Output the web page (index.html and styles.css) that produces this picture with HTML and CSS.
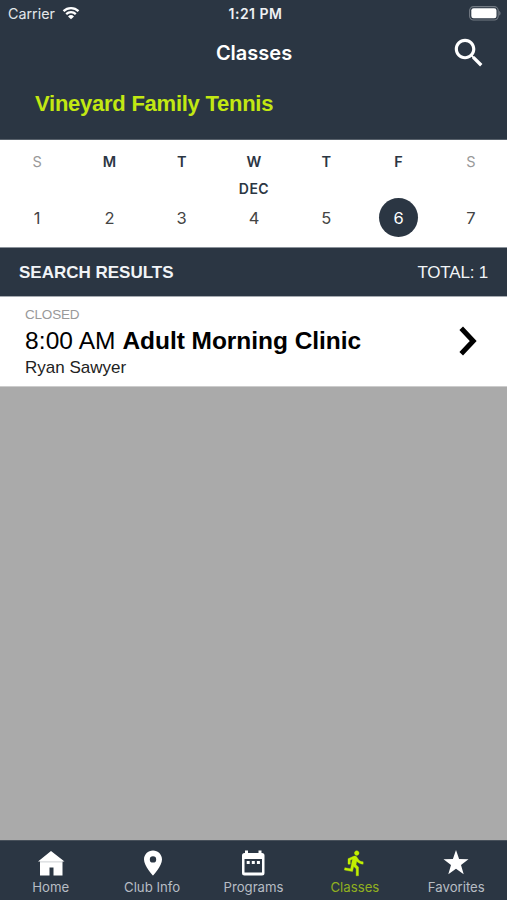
FILE: index.html
```html
<!DOCTYPE html>
<html lang="en">
<head>
    <meta charset="UTF-8">
    <meta name="viewport" content="width=device-width, initial-scale=1.0">
    <title>Classes</title>
    <link rel="stylesheet" href="styles.css">
</head>
<body>
    <header class="header">
        <div class="status-bar">
            <div class="carrier">
                <span>Carrier</span>
                <svg class="wifi" viewBox="0 0 18 14">
                    <path d="M1.5 5.2a10.8 10.8 0 0 1 15 0M4.2 8.1a7 7 0 0 1 9.6 0" fill="none" stroke="#fff" stroke-width="2.3"/>
                    <path d="M9 13.2L6 10.4a4.4 4.4 0 0 1 6 0z" fill="#fff"/>
                </svg>
            </div>
            <span class="clock">1:21 PM</span>
            <svg class="battery" viewBox="0 0 32 15">
                <rect x=".6" y=".6" width="28.6" height="13.4" rx="4" fill="none" stroke="#737b84" stroke-width="1.1"/>
                <rect x="2.3" y="2.3" width="25.2" height="10" rx="2.3" fill="#fff"/>
                <path d="M30.2 5c1.8.7 1.8 3.9 0 4.6z" fill="#737b84"/>
            </svg>
        </div>
        <div class="title-bar">
            <h1>Classes</h1>
            <svg class="search-icon" viewBox="0 0 24 24">
                <path d="M15.5 14h-.79l-.28-.27C15.41 12.59 16 11.11 16 9.5 16 5.91 13.09 3 9.5 3S3 5.91 3 9.5 5.91 16 9.5 16c1.61 0 3.09-.59 4.23-1.57l.27.28v.79l5 4.99L20.49 19l-4.99-5zm-6 0C7.01 14 5 11.99 5 9.5S7.01 5 9.5 5 14 7.01 14 9.5 11.99 14 9.5 14z"/>
            </svg>
        </div>
        <h2>Vineyard Family Tennis</h2>
    </header>

    <section class="calendar">
        <div class="day weekend"><b>S</b><small></small><span>1</span></div>
        <div class="day"><b>M</b><small></small><span>2</span></div>
        <div class="day"><b>T</b><small></small><span>3</span></div>
        <div class="day"><b>W</b><small>DEC</small><span>4</span></div>
        <div class="day"><b>T</b><small></small><span>5</span></div>
        <div class="day selected"><b>F</b><small></small><span>6</span></div>
        <div class="day weekend"><b>S</b><small></small><span>7</span></div>
    </section>

    <div class="results-bar">
        <span class="results-title">SEARCH RESULTS</span>
        <span class="results-total">TOTAL: 1</span>
    </div>

    <main class="results">
        <div class="result">
            <div class="result-info">
                <p class="result-status">CLOSED</p>
                <p class="result-name"><span>8:00 AM</span> <strong>Adult Morning Clinic</strong></p>
                <p class="result-coach">Ryan Sawyer</p>
            </div>
            <svg class="chevron" viewBox="0 0 18 30">
                <path d="M2.2 2.3L14.2 15L2.2 27.7" fill="none" stroke="#000" stroke-width="5"/>
            </svg>
        </div>
    </main>

    <nav class="tabs">
        <div class="tab">
            <svg viewBox="0 0 28 28">
                <path d="M14 2L27.5 12.5H25.5V26.5H16.5V18.5H12.5V26.5H3V12.5H1z"/>
                <path d="M3 12.9H25.5" stroke="#a9afb5" stroke-width=".6"/>
            </svg>
            <span>Home</span>
        </div>
        <div class="tab">
            <svg viewBox="0 0 28 28">
                <path fill-rule="evenodd" d="M15 1.5c-5 0-9 4-9 8.900C6 17 15 26.500 15 26.500s9-9.500 9-16.100c0-4.900-4-8.900-9-8.900zm0 12.100a3.200 3.200 0 1 1 0-6.400 3.200 3.200 0 0 1 0 6.400z"/>
            </svg>
            <span>Club Info</span>
        </div>
        <div class="tab">
            <svg viewBox="0 0 28 28">
                <rect x="6" y="1.5" width="3" height="5"/>
                <rect x="19.500" y="1.500" width="3" height="5"/>
                <path fill-rule="evenodd" d="M5.500 4h17.500a2.500 2.500 0 0 1 2.500 2.500v17.500a2.500 2.500 0 0 1-2.500 2.500H5.500a2.500 2.500 0 0 1-2.500-2.500V6.500a2.500 2.500 0 0 1 2.500-2.500zM5.500 10v13.500h17.500V10z"/>
                <path d="M7.700 12h3v3h-3zM12.800 12h3v3h-3zM17.900 12h3v3h-3z"/>
            </svg>
            <span>Programs</span>
        </div>
        <div class="tab active">
            <svg viewBox="0 0 24 24">
                <path d="M13.490 5.480c1.100 0 2-.9 2-2s-.9-2-2-2-2 .9-2 2 .9 2 2 2zm-3.600 13.900l1-4.400 2.100 2v6h2v-7.500l-2.100-2 .6-3c1.300 1.500 3.300 2.500 5.500 2.500v-2c-1.900 0-3.500-1-4.300-2.400l-1-1.600c-.4-.6-1-1-1.700-1-.3 0-.5.1-.8.1l-5.200 2.200v4.700h2v-3.400l1.800-.7-1.600 8.100-4.900-1-.4 2 7 1.400z" stroke="#c2f000" stroke-width=".3"/>
            </svg>
            <span>Classes</span>
        </div>
        <div class="tab">
            <svg viewBox="0 0 28 28">
                <path d="M14 1L17.100 10.100L26.500 10.300L19 16.100L21.700 25.300L14 19.800L6.300 25.300L9 16.100L1.500 10.300L10.900 10.100z"/>
            </svg>
            <span>Favorites</span>
        </div>
    </nav>
</body>
</html>
```
FILE: styles.css
```css
* {
    box-sizing: border-box;
}

body {
    margin: 0;
    height: 900px;
    display: flex;
    flex-direction: column;
    overflow: hidden;
    background-color: #aaa;
    font-family: Inter, Roboto, sans-serif;
}

h1, h2, p {
    margin: 0;
    white-space: nowrap;
}

svg {
    display: block;
    flex-shrink: 0;
}

.header {
    height: 140px;
    flex-shrink: 0;
    background-color: #2b3643;
    color: #fff;
    border-bottom: 1px solid #58616b;
}

.status-bar {
    display: grid;
    grid-template-columns: 1fr auto 1fr;
    align-items: center;
    height: 27px;
    padding: 0 6px 0 8px;
    font-size: 14.3px;
}

.carrier {
    display: flex;
    align-items: center;
    gap: 7px;
    color: #e3e7eb;
}

.wifi {
    width: 18px;
    height: 14px;
    margin-top: -1px;
}

.clock {
    padding-left: 2px;
    font-size: 14px;
    font-weight: 600;
    letter-spacing: 0.5px;
    color: #eef1f4;
}

.battery {
    width: 32px;
    height: 15px;
    justify-self: end;
}

.title-bar {
    display: grid;
    grid-template-columns: 1fr auto 1fr;
    align-items: center;
    height: 50px;
    padding: 1px 19px 0 20px;
}

.title-bar h1 {
    grid-column: 2;
    font-size: 20px;
    font-weight: 600;
}

.search-icon {
    width: 38px;
    height: 38px;
    fill: #fff;
    justify-self: end;
}

.header h2 {
    padding-left: 35px;
    font-family: "Liberation Sans", Arial, sans-serif;
    font-size: 22px;
    line-height: 53px;
    letter-spacing: -0.25px;
    color: #c2e812;
}

.calendar {
    display: grid;
    grid-template-columns: repeat(7, 1fr);
    height: 108px;
    flex-shrink: 0;
    padding: 10px 0 0 1px;
    background-color: #fff;
    border-bottom: 1px solid #8b929a;
}

.day {
    display: flex;
    flex-direction: column;
    align-items: center;
    color: #2b3643;
}

.day b {
    font-size: 14.5px;
    font-weight: 600;
    line-height: 24px;
}

.day small {
    height: 24px;
    font-size: 14px;
    font-weight: 600;
    line-height: 29px;
    letter-spacing: 0.5px;
}

.day span {
    width: 39px;
    height: 39px;
    border-radius: 50%;
    font-size: 16.5px;
    line-height: 40px;
    text-align: center;
    color: #444;
}

.day.weekend b {
    font-weight: 400;
    color: #999;
}

.day.selected span {
    background-color: #2b3643;
    color: #fff;
}

.results-bar {
    display: flex;
    justify-content: space-between;
    align-items: center;
    height: 48px;
    flex-shrink: 0;
    padding: 2px 19px 0;
    background-color: #2b3643;
    color: #f1f4f7;
    font-family: "Liberation Sans", Arial, sans-serif;
    font-size: 17px;
}

.results-title {
    font-weight: bold;
}

.results-total {
    letter-spacing: -0.2px;
}

.results {
    flex: 1;
    font-family: "Liberation Sans", Arial, sans-serif;
}

.result {
    display: flex;
    justify-content: space-between;
    align-items: center;
    height: 91px;
    padding: 0 30px 1px 25px;
    background-color: #fff;
    border-top: 1px solid #a6abb1;
    border-bottom: 1px solid #ccc;
}

.result-status {
    font-size: 13.5px;
    line-height: 17px;
    letter-spacing: -0.2px;
    color: #999;
}

.result-name {
    font-size: 24.5px;
    line-height: 35px;
}

.result-name span {
    letter-spacing: 0.1px;
}

.result-name strong {
    letter-spacing: -0.04px;
}

.result-coach {
    font-size: 17px;
    line-height: 19px;
    color: #222;
}

.chevron {
    width: 18px;
    height: 30px;
}

.tabs {
    display: grid;
    grid-template-columns: repeat(5, 1fr);
    height: 60px;
    flex-shrink: 0;
    background-color: #2b3643;
    border-top: 1px solid #47505a;
}

.tab {
    display: flex;
    flex-direction: column;
    align-items: center;
    padding-top: 8px;
    color: #b7bdc4;
    font-size: 13.2px;
}

.tab svg {
    width: 28px;
    height: 28px;
    fill: #fff;
}

.tab span {
    line-height: 20px;
}

.tab.active {
    color: #91b01f;
}

.tab.active svg {
    fill: #c2f000;
}
```
